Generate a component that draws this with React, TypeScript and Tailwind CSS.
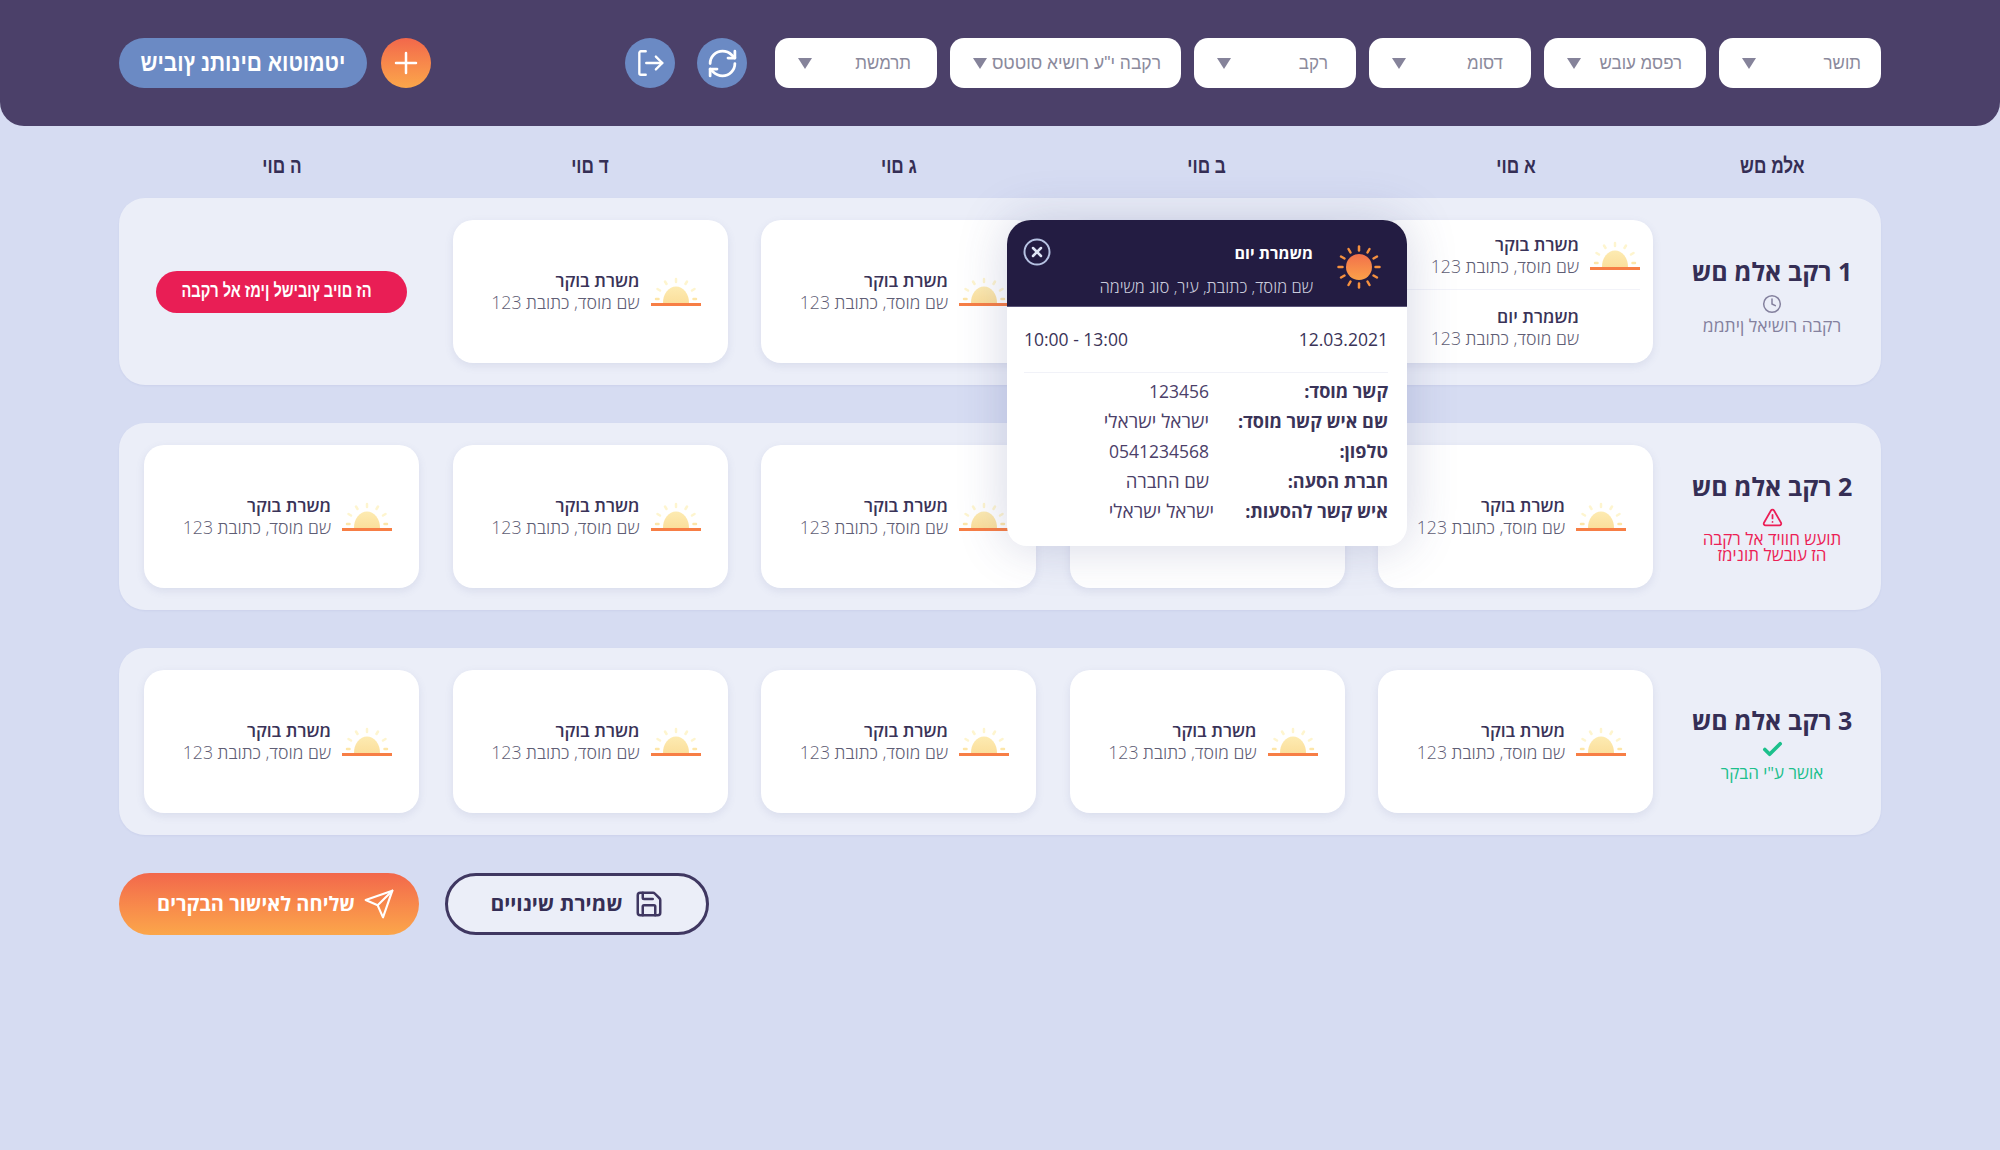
import React from "react";
import { Save, RefreshCw, Clock, TriangleAlert, Check } from "lucide-react";

const Horizon = () => (
  <svg width="50" height="30" viewBox="0 0 50 30" className="shrink-0" fill="none">
    <defs>
      <linearGradient id="hz" x1="0" y1="0" x2="0" y2="1">
        <stop offset="0" stopColor="#fdebb2" />
        <stop offset="1" stopColor="#fbdf9c" />
      </linearGradient>
    </defs>
    <path d="M12 26 a13 16.500 0 0 1 26 0 z" fill="url(#hz)" />
    <g stroke="#fef5cf" strokeWidth="2.500" strokeLinecap="round">
      <path d="M25 2v3" />
      <path d="M14 4.500l1.500 2.500" />
      <path d="M36 4.500l-1.500 2.500" />
      <path d="M6.500 12l2.500 1.500" />
      <path d="M43.500 12l-2.500 1.500" />
    </g>
    <g stroke="#fde6a8" strokeWidth="2.500" strokeLinecap="round">
      <path d="M5 22h2.500" />
      <path d="M42.500 22h2.500" />
    </g>
    <rect x="0" y="26" width="50" height="3" fill="#f77e45" />
  </svg>
);

const Sun = () => (
  <svg width="46" height="46" viewBox="0 0 46 46" fill="none" className="shrink-0 mt-[8px]">
    <defs>
      <linearGradient id="sn" x1="0" y1="0" x2="0" y2="1">
        <stop offset="0" stopColor="#f2704b" />
        <stop offset="1" stopColor="#fba149" />
      </linearGradient>
    </defs>
    <circle cx="23" cy="23" r="13" fill="url(#sn)" />
    <g stroke="#f6913f" strokeWidth="2.500" strokeLinecap="round">
      <path d="M23 2.500v4" />
      <path d="M23 39.500v4" />
      <path d="M2.500 23h4" />
      <path d="M39.500 23h4" />
      <path d="M12.500 5l2 3.500" />
      <path d="M33.500 5l-2 3.500" />
      <path d="M12.500 41l2-3.500" />
      <path d="M33.500 41l-2-3.500" />
      <path d="M5 12.500l3.500 2" />
      <path d="M41 12.500l-3.500 2" />
      <path d="M5 33.500l3.500-2" />
      <path d="M41 33.500l-3.500-2" />
    </g>
  </svg>
);

const ShiftText = ({ title }: { title: string }) => (
  <div className="text-right whitespace-nowrap pb-[2px]">
    <div className="text-[17.500px] leading-[22px] font-semibold text-[#3a3358]">{title}</div>
    <div className="text-[17.700px] leading-[22px] font-light text-[#5f5e75]">שם מוסד, כתובת 123</div>
  </div>
);

const Card = () => (
  <div className="w-[275px] h-[143px] bg-white rounded-[20px] shadow-[0_3px_8px_rgba(90,100,160,0.12)] flex items-center gap-[11px] px-[27px]">
    <Horizon />
    <ShiftText title="משרת בוקר" />
  </div>
);

const DoubleCard = () => (
  <div className="w-[275px] h-[143px] bg-white rounded-[20px] shadow-[0_3px_8px_rgba(90,100,160,0.12)] flex flex-col px-[13px]">
    <div className="h-[70px] pt-[2px] flex items-center gap-[11px] border-b border-[#f2f3f9]">
      <Horizon />
      <ShiftText title="משרת בוקר" />
    </div>
    <div className="flex-1 flex items-center gap-[11px] pt-[3px]">
      <div className="w-[50px]" />
      <ShiftText title="משמרת יום" />
    </div>
  </div>
);

const narrow = "font-['Liberation_Sans',sans-serif]";

const Filter = ({
  label,
  w = "w-[162px]",
  pr,
  sx = "scale-x-[0.89]",
}: {
  label: string;
  w?: string;
  pr: string;
  sx?: string;
}) => (
  <div className={`${w} ${pr} h-[50px] bg-white rounded-[14px] flex items-center pl-[23px] ${narrow} text-[19px] text-[#8b8a9c]`}>
    <span className={`block flex-1 min-w-0 whitespace-nowrap origin-right ${sx}`}>{label}</span>
    <span className="shrink-0 w-0 h-0 border-l-[7px] border-r-[7px] border-t-[11px] border-l-transparent border-r-transparent border-t-[#85839a]" />
  </div>
);

const Row = ({ children, name }: { children: React.ReactNode; name: React.ReactNode }) => (
  <div className="h-[187px] bg-[#ebeef8] rounded-[26px] flex items-center pl-[25px] shadow-[0_1px_2px_rgba(90,100,160,0.08)]">
    <div className="w-[228px] pl-[10px] flex flex-col items-center text-center">{name}</div>
    <div className="flex gap-[33.500px] items-center">{children}</div>
  </div>
);

const Heading = ({ text }: { text: string }) => (
  <div className="text-[25px] leading-[32px] font-bold text-[#352e55] whitespace-nowrap">{text}</div>
);

const info: [string, string, string][] = [
  ["קשר מוסד:", "123456", "text-[17.500px]"],
  ["שם איש קשר מוסד:", "ישראל ישראלי", "text-[19px]"],
  ["טלפון:", "0541234568", "text-[17.500px]"],
  ["חברת הסעה:", "שם החברה", "text-[18.500px]"],
  ["איש קשר להסעות:", "ישראל ישראלי", "text-[19px] mr-[-5px]"],
];

export default function App() {
  return (
    <div dir="rtl" className="relative min-h-[1150px] bg-[#d6dcf2] font-['Open_Sans','Liberation_Sans',sans-serif] overflow-hidden">
      <header className="h-[126px] bg-[#4b4069] rounded-b-[24px] px-[119px] flex items-center">
        <div className="flex gap-[13px]">
          <Filter label="תושר" pr="pr-[20px]" />
          <Filter label="רפסמ עובש" pr="pr-[24px]" />
          <Filter label="דסומ" pr="pr-[28px]" />
          <Filter label="רקב" pr="pr-[28px]" />
          <Filter label={'רקבה י"ע רושיא סוטטס'} w="w-[231px]" pr="pr-[20px]" sx="scale-x-[0.92]" />
          <Filter label="תרמשת" pr="pr-[26px]" />
        </div>
        <div className="mr-[28px] w-[50px] h-[50px] rounded-full bg-[#6b8ac4] flex items-center justify-center text-white">
          <RefreshCw size={33} strokeWidth={2} />
        </div>
        <div className="mr-[22px] w-[50px] h-[50px] rounded-full bg-[#6b8ac4] flex items-center justify-center">
          <svg width="32" height="32" viewBox="0 0 30 30" fill="none" stroke="#fff" strokeWidth="2.200" strokeLinecap="round" strokeLinejoin="round">
            <path d="M11 4H6.500a1.500 1.500 0 0 0-1.500 1.500v19A1.500 1.500 0 0 0 6.500 26H11" />
            <path d="M11.500 15h15" />
            <path d="M20.500 9l6 6-6 6" />
          </svg>
        </div>
        <div className="mr-auto w-[50px] h-[50px] rounded-full bg-gradient-to-b from-[#f2674b] to-[#fba64a] flex items-center justify-center text-white">
          <svg width="24" height="24" viewBox="0 0 24 24" fill="none" stroke="#fff" strokeWidth="2.500" strokeLinecap="round">
            <path d="M12 2v20M2 12h20" />
          </svg>
        </div>
        <div className={`mr-[14px] w-[248px] h-[50px] rounded-full bg-[#6b8ac4] flex items-center justify-center text-white text-[25px] font-bold ${narrow}`}>
          <span className="inline-block whitespace-nowrap scale-x-[0.84]">יטמוטוא םינותנ ץוביש</span>
        </div>
      </header>

      <main className="px-[119px]">
        <div className={`h-[72px] pt-[7px] flex items-center pl-[25px] text-[21px] font-bold text-[#352e55] ${narrow}`}>
          <div className="w-[228px] pl-[10px] text-center">
            <span className="inline-block scale-x-[0.82]">אלמ םש</span>
          </div>
          <div className="flex gap-[33.500px]">
            {["א םוי", "ב םוי", "ג םוי", "ד םוי", "ה םוי"].map((d) => (
              <div key={d} className="w-[275px] text-center">
                <span className="inline-block scale-x-[0.82]">{d}</span>
              </div>
            ))}
          </div>
        </div>

        <div className="flex flex-col gap-[38px]">
          <Row
            name={
              <div className="pt-[7px] flex flex-col items-center">
                <Heading text="1 רקב אלמ םש" />
                <Clock size={20} strokeWidth={1.800} className="text-[#84819e] mt-[7px]" />
                <div className="text-[17.500px] leading-[22px] text-[#84819e] whitespace-nowrap">רקבה רושיאל ןיתממ</div>
              </div>
            }
          >
            <DoubleCard />
            <Card />
            <Card />
            <Card />
            <div className="w-[275px] flex justify-center">
              <div className={`w-[251px] h-[42px] rounded-full bg-[#e91e55] pr-[10px] text-white flex items-center justify-center text-[19px] font-bold ${narrow}`}>
                <span className="inline-block whitespace-nowrap scale-x-[0.77]">הז םויב ץובישל ןימז אל רקבה</span>
              </div>
            </div>
          </Row>
          <Row
            name={
              <div className="flex flex-col items-center">
                <Heading text="2 רקב אלמ םש" />
                <TriangleAlert size={21} strokeWidth={2} className="text-[#ec1f56] mt-[5px]" />
                <div className="mt-[3px] text-[17px] leading-[16px] font-medium text-[#ec1f56] whitespace-nowrap">
                  תועש חוויד אל רקבה
                  <br />
                  הז עובשל תונימז
                </div>
              </div>
            }
          >
            <Card />
            <Card />
            <Card />
            <Card />
            <Card />
          </Row>
          <Row
            name={
              <div className="pt-[4px] flex flex-col items-center">
                <Heading text="3 רקב אלמ םש" />
                <Check size={23} strokeWidth={3.800} className="text-[#1cc08c] mt-[2px]" />
                <div className="mt-[1px] text-[17px] leading-[22px] font-medium text-[#1cc08c] whitespace-nowrap">{'אושר ע"י הבקר'}</div>
              </div>
            }
          >
            <Card />
            <Card />
            <Card />
            <Card />
            <Card />
          </Row>
        </div>

        <div dir="ltr" className="flex gap-[26px] mt-[38px]">
          <div dir="rtl" className="w-[300px] h-[62px] pl-[14px] rounded-full bg-gradient-to-b from-[#f2674b] to-[#fba64a] flex items-center justify-center gap-[8px] text-white text-[20px] font-bold">
            <svg width="32" height="32" viewBox="0 0 24 24" fill="none" stroke="#fff" strokeWidth="1.600" strokeLinecap="round" strokeLinejoin="round">
              <path d="M22 2 11 13" />
              <path d="M22 2l-7 20-4-9-9-4z" />
            </svg>
            <span className="whitespace-nowrap">שליחה לאישור הבקרים</span>
          </div>
          <div dir="rtl" className="w-[264px] h-[62px] rounded-full border-[3px] border-[#3f3761] bg-[#ebeef8] flex items-center justify-center gap-[11px] text-[#352e55] text-[21px] font-bold">
            <Save size={30} strokeWidth={2} className="text-[#3f3761]" />
            <span className="whitespace-nowrap">שמירת שינויים</span>
          </div>
        </div>
      </main>

      <div className="absolute left-[1007px] top-[220px] w-[400px] h-[326px] bg-white rounded-t-[24px] rounded-b-[20px] shadow-[0_0_50px_rgba(60,70,130,0.22)] overflow-hidden">
        <div className="h-[87px] bg-[#231c42] flex items-center pr-[25px] pl-[16px] border-b border-[#5a5478]">
          <Sun />
          <div className="mr-[23px] mt-[14px] text-right flex-1">
            <div className="text-[16px] leading-[22px] font-bold text-white">משמרת יום</div>
            <div className="mt-[12px] text-[16.600px] leading-[22px] font-light text-[#c9cbdc] whitespace-nowrap">שם מוסד, כתובת, עיר, סוג משימה</div>
          </div>
          <svg width="28" height="28" viewBox="0 0 28 28" fill="none" className="self-start mt-[18px]" stroke="#b6c2e2" strokeLinecap="round">
            <circle cx="14" cy="14" r="12.500" strokeWidth="2" />
            <path d="M10 10l8 8M18 10l-8 8" strokeWidth="2.500" stroke="#dfe5f5" />
          </svg>
        </div>
        <div className="pr-[19px] pl-[17px]">
          <div className="h-[66px] flex items-center justify-between border-b border-[#f1f2f8] text-[17.500px] font-medium text-[#3a3358]">
            <span>12.03.2021</span>
            <span dir="ltr">10:00 - 13:00</span>
          </div>
          <div className="pt-[3px]">
            {info.map(([k, v, cls]) => (
              <div key={k} className="h-[30px] flex items-center">
                <div className="w-[179px] text-[18px] font-bold text-[#3a3358] whitespace-nowrap">{k}</div>
                <div className={`font-medium text-[#4b4069] whitespace-nowrap ${cls}`}>{v}</div>
              </div>
            ))}
          </div>
        </div>
      </div>
    </div>
  );
}
